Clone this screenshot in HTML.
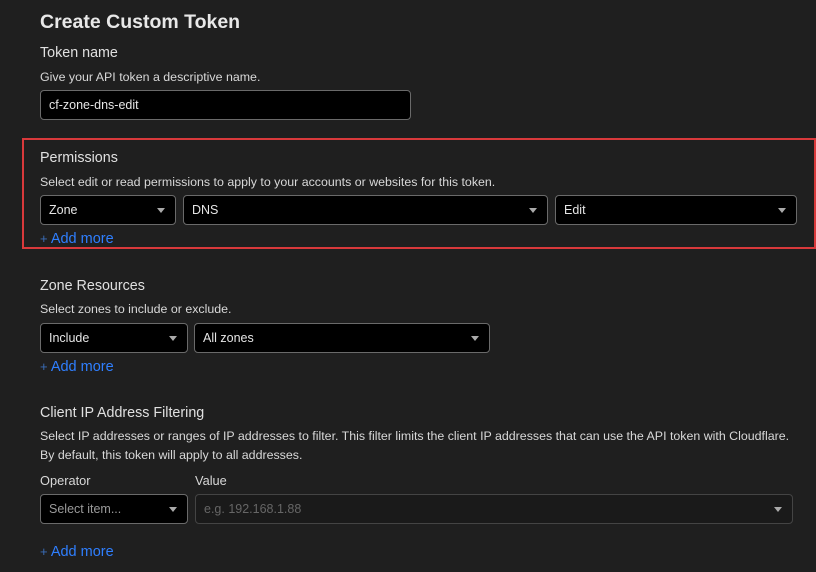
<!DOCTYPE html>
<html><head><meta charset="utf-8"><style>
*{box-sizing:border-box;margin:0;padding:0}
body{width:816px;height:572px;background:#1f1f1f;color:#e6e6e6;font-family:"Liberation Sans",sans-serif;position:relative;overflow:hidden}
.a{position:absolute;white-space:nowrap}
h1{position:absolute;left:40px;top:11px;font-size:19.5px;font-weight:bold;color:#e8e8e8}
.lbl{font-size:14.3px;color:#e0e0e0}
.d{font-size:12.4px;color:#d8d8d8}
.box{position:absolute;background:#000;border:1px solid #6a6a6a;border-radius:4px;font-size:12.5px;color:#e6e6e6;padding-left:8px;line-height:28px;height:30px}
.box.c:after{content:"";position:absolute;right:10px;top:12px;border-left:4.5px solid transparent;border-right:4.5px solid transparent;border-top:5px solid #aaa}
.add{font-size:14.5px;color:#2f7fff}
.add span{color:#3a6db8;font-size:13px}
</style></head><body>
<h1>Create Custom Token</h1>
<div class="a lbl" style="left:40px;top:45px">Token name</div>
<div class="a d" style="left:40px;top:70px">Give your API token a descriptive name.</div>
<div class="box" style="left:40px;top:90px;width:371px">cf-zone-dns-edit</div>

<div class="a" style="left:22px;top:138px;width:794px;height:111px;border:2px solid #d9393b"></div>
<div class="a lbl" style="left:40px;top:150px">Permissions</div>
<div class="a d" style="left:40px;top:175px">Select edit or read permissions to apply to your accounts or websites for this token.</div>
<div class="box c" style="left:40px;top:195px;width:136px">Zone</div>
<div class="box c" style="left:183px;top:195px;width:365px">DNS</div>
<div class="box c" style="left:555px;top:195px;width:242px">Edit</div>
<div class="a add" style="left:40px;top:231px"><span>+</span> Add more</div>

<div class="a lbl" style="left:40px;top:278px">Zone Resources</div>
<div class="a d" style="left:40px;top:302px">Select zones to include or exclude.</div>
<div class="box c" style="left:40px;top:323px;width:148px">Include</div>
<div class="box c" style="left:194px;top:323px;width:296px">All zones</div>
<div class="a add" style="left:40px;top:359px"><span>+</span> Add more</div>

<div class="a lbl" style="left:40px;top:405px">Client IP Address Filtering</div>
<div class="a d" style="left:40px;top:429px">Select IP addresses or ranges of IP addresses to filter. This filter limits the client IP addresses that can use the API token with Cloudflare.</div>
<div class="a d" style="left:40px;top:448px">By default, this token will apply to all addresses.</div>
<div class="a d" style="left:40px;top:473px;font-size:12.8px">Operator</div>
<div class="a d" style="left:195px;top:473px;font-size:12.8px">Value</div>
<div class="box c" style="left:40px;top:494px;width:148px;color:#9a9a9a">Select item...</div>
<div class="box c" style="left:195px;top:494px;width:598px;background:#1a1a1a;border-color:#444;color:#666">e.g. 192.168.1.88</div>
<div class="a add" style="left:40px;top:544px"><span>+</span> Add more</div>
</body></html>
